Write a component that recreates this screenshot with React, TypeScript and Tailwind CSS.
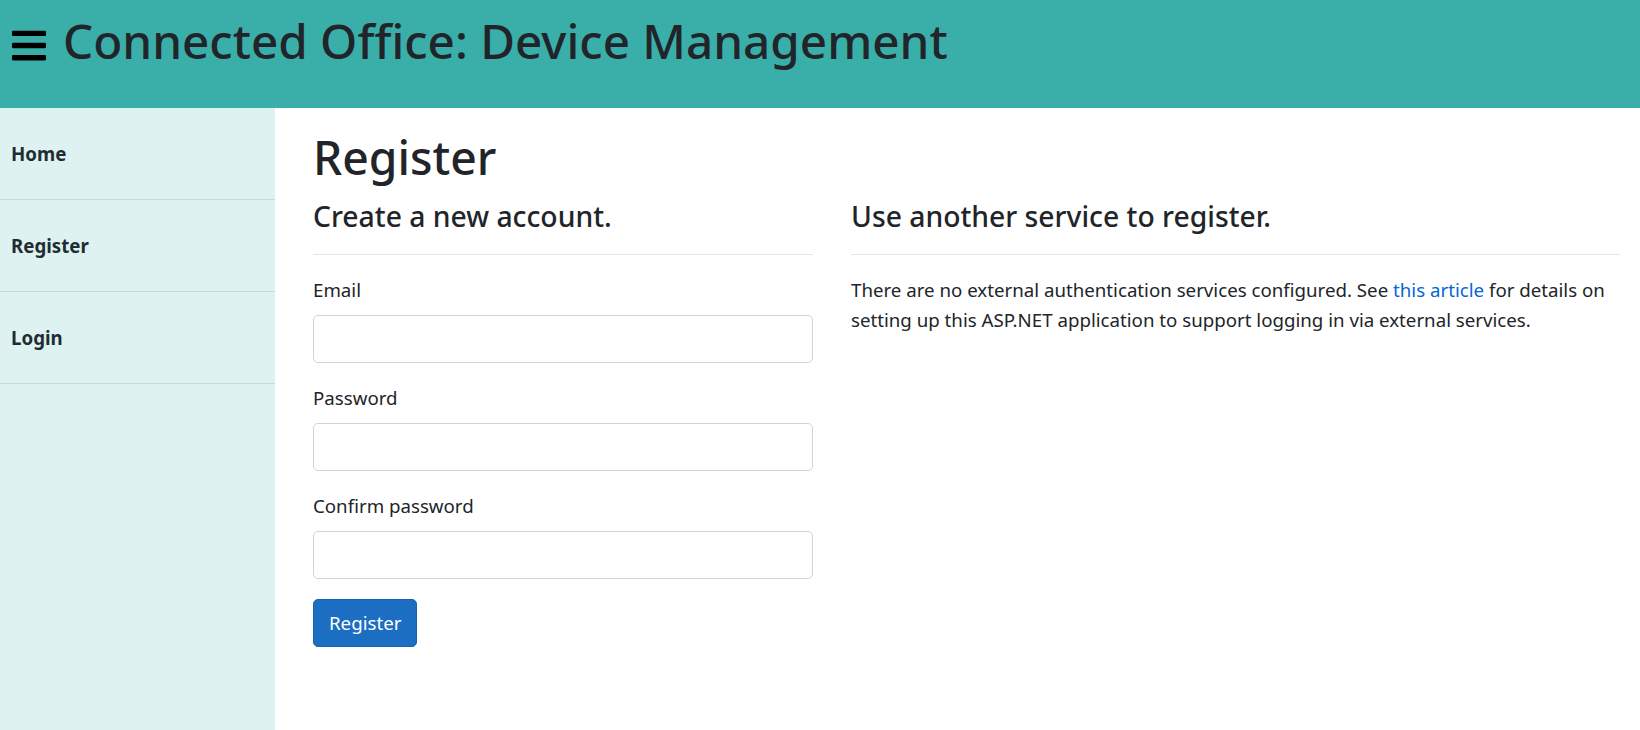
import { FaBars } from 'react-icons/fa'

const NAV = ['Home', 'Register', 'Login']

const FIELDS = [
  { label: 'Email', type: 'email' },
  { label: 'Password', type: 'password' },
  { label: 'Confirm password', type: 'password' },
]

export default function App() {
  return (
    <div className="h-screen flex flex-col bg-white text-[#212529] font-['Noto_Sans',sans-serif] text-[18.7px] leading-[30px]">
      <header className="h-[108px] shrink-0 bg-[#3aafa9] flex items-start pl-[12px] pt-[11px]">
        <FaBars className="w-[34px] h-[39px] mt-[15px] text-black shrink-0" />
        <h1 className="ml-[17px] text-[47.6px] leading-[60px] font-medium">Connected Office: Device Management</h1>
      </header>

      <div className="flex flex-1 min-h-0">
        <aside className="w-[275px] shrink-0 bg-[#def2f1]">
          {NAV.map(item => (
            <a
              key={item}
              href="#"
              className="h-[92px] flex items-center px-[11px] border-b border-[#c5dcdb] font-bold text-[#1f2d33]"
            >
              {item}
            </a>
          ))}
        </aside>

        <main className="flex-1 pl-[38px] pt-[20px]">
          <h1 className="text-[46.3px] leading-[60px] font-medium mb-[10px]">Register</h1>
          <div className="flex gap-[38px]">
            <section className="w-[500px]">
              <h4 className="text-[28.3px] leading-[36px] font-medium">Create a new account.</h4>
              <hr className="my-[20px] border-t border-black/10" />
              {FIELDS.map(f => (
                <div key={f.label} className="mb-[20px]">
                  <label className="block mb-[10px]">{f.label}</label>
                  <input
                    type={f.type}
                    className="block w-full h-[48px] px-[15px] border border-[#ced4da] rounded-[5px] bg-white"
                  />
                </div>
              ))}
              <button className="h-[48px] px-[15px] bg-[#1b6ec2] border border-[#1861ac] rounded-[5px] text-white">
                Register
              </button>
            </section>

            <section className="w-[769px]">
              <h4 className="text-[28.3px] leading-[36px] font-medium">Use another service to register.</h4>
              <hr className="my-[20px] border-t border-black/10" />
              <p>
                There are no external authentication services configured. See{' '}
                <a href="#" className="text-[#0366d6]">this article</a> for details on setting up this ASP.NET
                application to support logging in via external services.
              </p>
            </section>
          </div>
        </main>
      </div>
    </div>
  )
}
